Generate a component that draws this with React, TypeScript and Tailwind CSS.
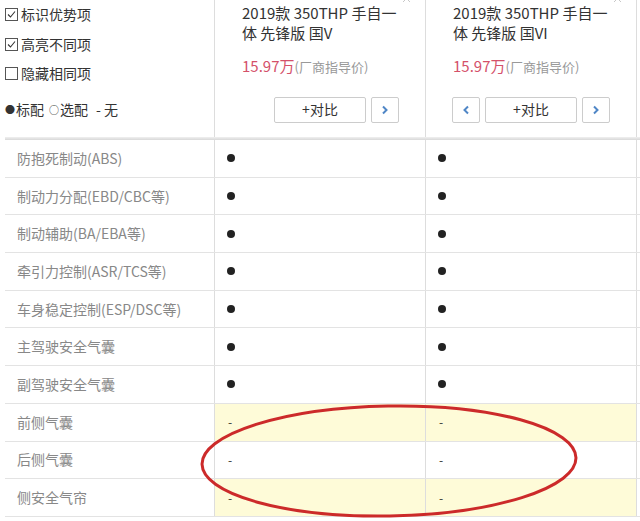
import React from "react";

const rows = [
  { label: "防抱死制动(ABS)", v: "●" },
  { label: "制动力分配(EBD/CBC等)", v: "●" },
  { label: "制动辅助(BA/EBA等)", v: "●" },
  { label: "牵引力控制(ASR/TCS等)", v: "●" },
  { label: "车身稳定控制(ESP/DSC等)", v: "●" },
  { label: "主驾驶安全气囊", v: "●" },
  { label: "副驾驶安全气囊", v: "●" },
  { label: "前侧气囊", v: "-", hl: true },
  { label: "后侧气囊", v: "-" },
  { label: "侧安全气帘", v: "-", hl: true },
];

const font = { fontFamily: '"Noto Sans CJK SC", "Noto Sans", sans-serif' };

function Check({ checked, label }: { checked: boolean; label: string }) {
  return (
    <div className="flex items-center gap-[3px] h-[29.5px]">
      <span className="w-[13px] h-[13px] border border-[#555] bg-white flex items-center justify-center">
        {checked && (
          <svg width="9" height="9" viewBox="0 0 9 9">
            <path d="M1 4.5 L3.5 7 L8 1.5" fill="none" stroke="#333" strokeWidth="1.1" />
          </svg>
        )}
      </span>
      <span className="text-[14px] text-[#333]">{label}</span>
    </div>
  );
}

function Arrow({ dir }: { dir: "l" | "r" }) {
  return (
    <button className="w-[28px] h-[26px] border border-[#ccc] rounded-[2px] bg-white flex items-center justify-center">
      <svg width="8" height="10" viewBox="0 0 8 10">
        <path
          d={dir === "r" ? "M2 1.5 L5.5 5 L2 8.5" : "M6 1.5 L2.5 5 L6 8.5"}
          fill="none"
          stroke="#4f86c6"
          strokeWidth="2"
        />
      </svg>
    </button>
  );
}

function CarHead({ grade, prev }: { grade: string; prev: boolean }) {
  return (
    <div className="w-[211px] border-r border-[#ddd] relative pt-[3px]">
      {/* close mark, mostly scrolled out of view */}
      <svg className="absolute right-[14px] top-[-6px]" width="9" height="9" viewBox="0 0 9 9">
        <path d="M1 1 L8 8 M8 1 L1 8" stroke="#c8c8c8" strokeWidth="1" />
      </svg>
      <div className="pl-[27px] text-[15px] leading-[20px] text-[#333]">
        2019款 350THP 手自一
        <br />
        体 先锋版 {grade}
      </div>
      <div className="pl-[27px] mt-[12px] flex items-baseline">
        <span className="text-[15px] text-[#d4516a]">15.97万</span>
        <span className="text-[13px] text-[#999]">(厂商指导价)</span>
      </div>
      <div className="mt-[19px] flex gap-[5px] pl-[26px]">
        {prev ? <Arrow dir="l" /> : <div className="w-[28px]" />}
        <button className="w-[92px] h-[26px] border border-[#ccc] rounded-[2px] bg-white text-[14px] text-[#333]">
          +对比
        </button>
        <Arrow dir="r" />
      </div>
    </div>
  );
}

export default function App() {
  return (
    <div className="w-[640px] h-[521px] overflow-hidden bg-white relative" style={font}>
      {/* Header */}
      <div className="flex h-[137px]">
        <div className="w-[215px] border-r border-[#ddd] pl-[5px]">
          <Check checked label="标识优势项" />
          <Check checked label="高亮不同项" />
          <Check checked={false} label="隐藏相同项" />
          <div className="mt-[10px] text-[14px] text-[#333] flex items-center">
            <span className="text-[10px] mr-[1px]">●</span>标配
            <span className="text-[10px] ml-[5px] mr-[1px]">○</span>选配
            <span className="ml-[8px]">- 无</span>
          </div>
        </div>
        <CarHead grade="国V" prev={false} />
        <CarHead grade="国VI" prev />
      </div>
      <div className="ml-[5px] h-[3px] bg-gradient-to-b from-[#f0f0f0] to-[#d8d8d8]" />

      {/* Rows */}
      <div className="ml-[5px]">
        {rows.map((r) => (
          <div key={r.label} className="flex h-[37.7px] border-b border-[#e3e3e3]">
            <div className="w-[210px] border-r border-[#ddd] flex items-center pl-[12px] text-[14px] text-[#888]">
              {r.label}
            </div>
            {[0, 1].map((i) => (
              <div
                key={i}
                className={`w-[211px] border-r border-[#ddd] flex items-center pl-[10px] text-[#333] ${
                  r.hl ? "bg-[#fefbd8]" : "bg-white"
                }`}
              >
                {r.v === "●" ? (
                  <span className="w-[8px] h-[8px] rounded-full bg-[#222] ml-[2px]" />
                ) : (
                  <span className="text-[12px] ml-[3px]">-</span>
                )}
              </div>
            ))}
          </div>
        ))}
      </div>

      {/* Red annotation ellipse */}
      <svg className="absolute left-0 top-0 pointer-events-none" width="640" height="521">
        <ellipse
          cx="389"
          cy="461"
          rx="187"
          ry="55"
          fill="none"
          stroke="#cc2a2a"
          strokeWidth="3"
          transform="rotate(-1 389 461)"
        />
      </svg>
    </div>
  );
}
